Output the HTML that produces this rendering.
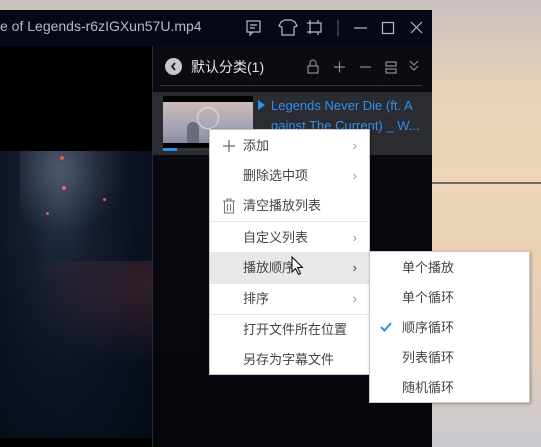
<!DOCTYPE html>
<html><head><meta charset="utf-8"><style>
*{margin:0;padding:0;box-sizing:border-box}
body{width:541px;height:447px;overflow:hidden;position:relative;font-family:"Liberation Sans","Noto Sans CJK SC",sans-serif;background:linear-gradient(180deg,#c9c0bf 0%,#e9d2b8 20%,#eed5b8 40%,#ebd0b4 60%,#e2cdbd 80%,#c8c9d2 100%)}
.abs{position:absolute}
.tb{left:0;top:10px;width:432px;height:36px;background:#060816}
.title{left:0;top:18px;color:#b8bac2;font-size:14px;white-space:nowrap}
.left{left:0;top:46px;width:152px;height:401px;background:#000}
.vid{left:0;top:151px;width:152px;height:287px;background:radial-gradient(ellipse at 40% 10%,#2c3850 0%,#141c2e 30%,#0a1222 60%,#050a16 100%)}
.right{left:152px;top:46px;width:280px;height:401px;background:linear-gradient(180deg,#0b0c12,#05060c)}
.sep{left:152px;top:46px;width:1px;height:401px;background:#2a2c34}
.row{left:152px;top:92px;width:280px;height:63px;background:#2b2c31}
.menu{background:#fff;border:1px solid #c8c8c8;box-shadow:1px 1px 3px rgba(0,0,0,.3)}
.mi{position:absolute;left:0;width:100%;height:30px;line-height:30px;font-size:13px;color:#444;padding-left:33px}
.arr{position:absolute;right:12px;top:0;color:#999;font-size:13px}
.hr{position:absolute;left:0;width:100%;height:1px;background:#e4e4e4}
</style></head><body>
<div class="abs" style="left:432px;top:182px;width:109px;height:2px;background:#6a6a70"></div>
<div class="abs tb"></div>
<div class="abs title">e of Legends-r6zIGXun57U.mp4</div>
<svg class="abs" style="left:240px;top:14px" width="200" height="28" stroke="#b8bac2" fill="none" stroke-width="1.2">
<rect x="7" y="7" width="13" height="11"/><path d="M10 11h7M10 14h5M10 18l0 3 3-3"/>
<path d="M41 8l4-2h6l4 2 2 4-3 1v8h-12v-8l-3-1z"/>
<path d="M70 6v14M67 9h14v9h-14M78 6v3M78 18v3"/>
<path d="M98 6v16" stroke="#555"/>
<path d="M114 14h13"/><rect x="142.5" y="8.5" width="11" height="11"/>
<path d="M171 8l11 11M182 8l-11 11"/>
</svg>
<div class="abs left"></div>
<div class="abs vid">
<div class="abs" style="left:20px;top:0;width:130px;height:80px;background:radial-gradient(circle at 30% 20%,rgba(180,190,210,.25),transparent 60%)"></div>
<div class="abs" style="left:60px;top:5px;width:4px;height:4px;border-radius:50%;background:#e55"></div>
<div class="abs" style="left:62px;top:35px;width:4px;height:4px;border-radius:50%;background:#e66"></div>
<div class="abs" style="left:46px;top:61px;width:3px;height:3px;border-radius:50%;background:#e55"></div>
<div class="abs" style="left:103px;top:47px;width:3px;height:3px;border-radius:50%;background:#e55"></div>
<div class="abs" style="left:0;top:110px;width:152px;height:120px;background:radial-gradient(ellipse at 100% 20%,rgba(150,70,70,.3),transparent 60%)"></div>
</div>
<div class="abs right"></div>
<div class="abs sep"></div>
<div class="abs" style="left:165px;top:58px;width:17px;height:17px;border-radius:50%;background:#c8c8cc"></div>
<svg class="abs" style="left:165px;top:58px" width="17" height="17"><path d="M10 5l-3 3.5 3 3.5" stroke="#222" stroke-width="1.8" fill="none"/></svg>
<div class="abs" style="left:191px;top:57px;color:#e6e6ea;font-size:14px">默认分类(1)</div>
<svg class="abs" style="left:300px;top:56px" width="130" height="22" stroke="#8a8c94" fill="none" stroke-width="1.2">
<rect x="8" y="10" width="10" height="7"/><path d="M10 10v-3a3 3 0 0 1 6 0v3"/>
<path d="M34 11h11M39.5 5.5v11"/>
<path d="M60 11h11"/>
<rect x="86" y="6" width="10" height="4"/><rect x="86" y="13" width="10" height="4"/>
<path d="M110 5l4 4 4-4M110 10l4 4 4-4"/>
</svg>
<div class="abs" style="left:160px;top:85px;width:262px;height:1px;background:#33353d"></div>
<div class="abs row"></div>
<div class="abs" style="left:163px;top:96px;width:90px;height:55px;background:#000"></div>
<div class="abs" style="left:163px;top:102px;width:90px;height:41px;background:linear-gradient(180deg,#cdbdb8,#a8a4b4 60%,#8a8ca4)"></div>
<div class="abs" style="left:187px;top:122px;width:12px;height:21px;background:#6a6c7a;border-radius:6px 6px 0 0"></div>
<div class="abs" style="left:197px;top:107px;width:22px;height:22px;border-radius:50%;border:1px solid rgba(255,255,255,.6)"></div>
<div class="abs" style="left:163px;top:148px;width:14px;height:3px;background:#2f8ff0"></div>
<div class="abs" style="left:177px;top:148px;width:76px;height:3px;background:#333"></div>
<svg class="abs" style="left:258px;top:100px" width="8" height="10"><path d="M0 0l7 5-7 5z" fill="#2f8ff0"/></svg>
<div class="abs" style="left:271px;top:96px;color:#2f8ff0;font-size:13px;line-height:20px;width:150px">Legends Never Die (ft. A<br>gainst The Current) _ W...</div>

<div class="abs menu" style="left:209px;top:129px;width:161px;height:246px">
<div class="mi" style="top:1px">添加<span class="arr">›</span></div>
<svg class="abs" style="left:12px;top:9px" width="14" height="14"><path d="M7 1v12M1 7h12" stroke="#666" stroke-width="1.2"/></svg>
<div class="mi" style="top:31px">删除选中项<span class="arr">›</span></div>
<div class="mi" style="top:61px">清空播放列表</div>
<svg class="abs" style="left:12px;top:68px" width="14" height="16" stroke="#777" fill="none" stroke-width="1.1"><path d="M1 3h12M5 3V1h4v2M2.5 3v12h9V3M5.5 6v7M8.5 6v7"/></svg>
<div class="hr" style="top:91px"></div>
<div class="mi" style="top:93px">自定义列表<span class="arr">›</span></div>
<div class="mi" style="top:122px;height:32px;line-height:32px;background:#e8e8e8">播放顺序<span class="arr" style="color:#444">›</span></div>
<svg class="abs" style="left:81px;top:126px" width="12" height="20"><path d="M1 1v15l3.5-3.5 3 6 2-1-3-6h5z" fill="#fff" stroke="#000"/></svg>
<div class="mi" style="top:154px">排序<span class="arr">›</span></div>
<div class="hr" style="top:184px"></div>
<div class="mi" style="top:185px">打开文件所在位置</div>
<div class="mi" style="top:215px">另存为字幕文件</div>
</div>

<div class="abs menu" style="left:369px;top:251px;width:161px;height:152px">
<div class="mi" style="top:1px;padding-left:32px">单个播放</div>
<div class="mi" style="top:31px;padding-left:32px">单个循环</div>
<div class="mi" style="top:61px;padding-left:32px">顺序循环</div>
<svg class="abs" style="left:10px;top:70px" width="12" height="10"><path d="M1 5l3.5 3.5L11 1" stroke="#2f8ff0" stroke-width="2" fill="none"/></svg>
<div class="mi" style="top:91px;padding-left:32px">列表循环</div>
<div class="mi" style="top:121px;padding-left:32px">随机循环</div>
</div>
</body></html>
